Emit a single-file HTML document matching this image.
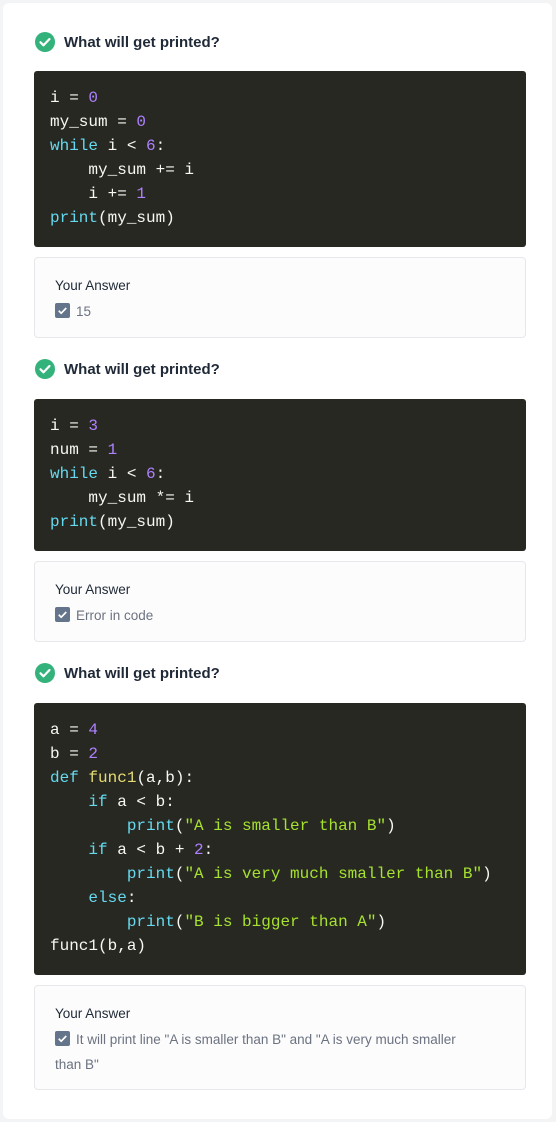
<!DOCTYPE html>
<html><head><meta charset="utf-8"><style>
body{margin:0;background:#f3f4f6;width:556px;height:1122px;overflow:hidden;font-family:"Liberation Sans",sans-serif}
.card{position:absolute;left:3px;top:3px;width:549px;height:1116px;background:#fff;border-radius:6px}
.h{position:absolute;left:35px;height:22px;display:flex;align-items:center;font-weight:bold;font-size:15px;color:#1f2937}
.h svg{margin-right:9px}
.code{position:absolute;left:34px;width:492px;background:#272822;border-radius:3px;box-sizing:border-box;padding:15px 16px;font-family:"Liberation Mono",monospace;font-size:16px;line-height:24px;color:#f8f8f2;white-space:pre}
.k{color:#66d9ef}.n{color:#ae81ff}.s{color:#a6e22e}.f{color:#e6db74}
.ans{position:absolute;left:34px;width:492px;background:#fcfcfd;border:1px solid #e5e7eb;border-radius:4px;box-sizing:border-box;padding:19px 60px 0 20px}
.ans .t{font-size:13.5px;color:#1f2937;line-height:18px;margin-bottom:4px}
.ans .v{font-size:13.5px;color:#6b7280;line-height:25px}
.cb{display:inline-block;width:15px;height:15px;background:#64748b;border-radius:2px;vertical-align:-2px;margin-right:6px;position:relative}
.cb svg{display:block}
</style></head><body>
<div class="card"></div>

<div class="h" style="top:31px"><svg width="20" height="20" viewBox="0 0 20 20"><circle cx="10" cy="10" r="10" fill="#34b27b"/><path d="M5.5 10.3l3 3 6-6.3" stroke="#fff" stroke-width="2.2" fill="none" stroke-linecap="round" stroke-linejoin="round"/></svg>What will get printed?</div>
<div class="code" style="top:71px;height:176px">i = <span class="n">0</span>
my_sum = <span class="n">0</span>
<span class="k">while</span> i &lt; <span class="n">6</span>:
    my_sum += i
    i += <span class="n">1</span>
<span class="k">print</span>(my_sum)</div>
<div class="ans" style="top:257px;height:81px"><div class="t">Your Answer</div><div class="v"><span class="cb"><svg width="15" height="15" viewBox="0 0 14 14"><path d="M3.5 7.2l2.3 2.3 4.7-4.8" stroke="#fff" stroke-width="1.6" fill="none"/></svg></span>15</div></div>

<div class="h" style="top:358px"><svg width="20" height="20" viewBox="0 0 20 20"><circle cx="10" cy="10" r="10" fill="#34b27b"/><path d="M5.5 10.3l3 3 6-6.3" stroke="#fff" stroke-width="2.2" fill="none" stroke-linecap="round" stroke-linejoin="round"/></svg>What will get printed?</div>
<div class="code" style="top:399px;height:152px">i = <span class="n">3</span>
num = <span class="n">1</span>
<span class="k">while</span> i &lt; <span class="n">6</span>:
    my_sum *= i
<span class="k">print</span>(my_sum)</div>
<div class="ans" style="top:561px;height:81px"><div class="t">Your Answer</div><div class="v"><span class="cb"><svg width="15" height="15" viewBox="0 0 14 14"><path d="M3.5 7.2l2.3 2.3 4.7-4.8" stroke="#fff" stroke-width="1.6" fill="none"/></svg></span>Error in code</div></div>

<div class="h" style="top:662px"><svg width="20" height="20" viewBox="0 0 20 20"><circle cx="10" cy="10" r="10" fill="#34b27b"/><path d="M5.5 10.3l3 3 6-6.3" stroke="#fff" stroke-width="2.2" fill="none" stroke-linecap="round" stroke-linejoin="round"/></svg>What will get printed?</div>
<div class="code" style="top:703px;height:272px">a = <span class="n">4</span>
b = <span class="n">2</span>
<span class="k">def</span> <span class="f">func1</span>(a,b):
    <span class="k">if</span> a &lt; b:
        <span class="k">print</span>(<span class="s">"A is smaller than B"</span>)
    <span class="k">if</span> a &lt; b + <span class="n">2</span>:
        <span class="k">print</span>(<span class="s">"A is very much smaller than B"</span>)
    <span class="k">else</span>:
        <span class="k">print</span>(<span class="s">"B is bigger than A"</span>)
func1(b,a)</div>
<div class="ans" style="top:985px;height:105px"><div class="t">Your Answer</div><div class="v"><span class="cb"><svg width="15" height="15" viewBox="0 0 14 14"><path d="M3.5 7.2l2.3 2.3 4.7-4.8" stroke="#fff" stroke-width="1.6" fill="none"/></svg></span>It will print line "A is smaller than B" and "A is very much smaller than B"</div></div>
</body></html>
